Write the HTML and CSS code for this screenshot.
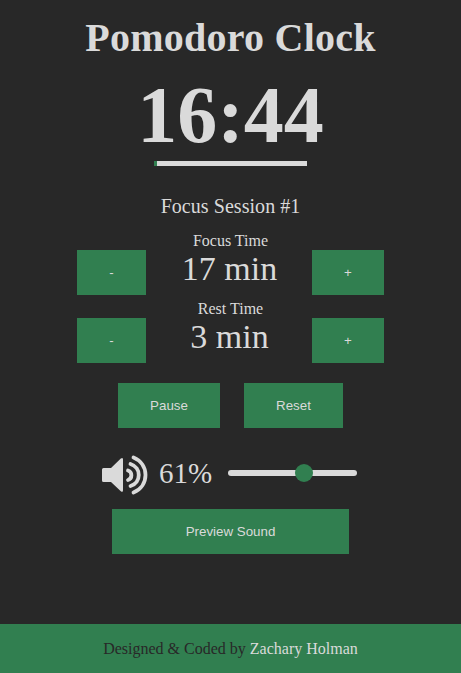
FILE: index.html
```html
<!DOCTYPE html>
<html lang="en">
<head>
<meta charset="utf-8">
<title>Pomodoro Clock</title>
<link rel="stylesheet" href="styles.css">
</head>
<body>
<main>
  <h1>Pomodoro Clock</h1>
  <div class="clock">16:44</div>
  <div class="progress"><div class="progress-fill"></div></div>
  <p class="session">Focus Session #1</p>
  <section class="setting">
    <button>-</button>
    <div class="setting-text"><span class="label">Focus Time</span><span class="value">17 min</span></div>
    <button>+</button>
  </section>
  <section class="setting">
    <button>-</button>
    <div class="setting-text"><span class="label">Rest Time</span><span class="value">3 min</span></div>
    <button>+</button>
  </section>
  <div class="actions"><button class="pause">Pause</button><button class="reset">Reset</button></div>
  <div class="volume">
    <svg class="speaker" viewBox="0 0 46 40" fill="none">
      <path class="cone" d="M1.500 13H9L18.800 3.600Q21 2 21 4.500v30.800q0 2.500-2.200 1L9 27H1.500Q0 27 0 25.500v-11Q0 13 1.500 13z"/>
      <path class="wave" d="M26 15.500c4.500 1.500 4.500 8 0 9.500M28.500 9c11 3.500 11 18.500 0 22M31.500 2.500c16 6.500 16 28.500 0 35"/>
    </svg>
    <span class="percent">61%</span>
    <div class="slider"><div class="thumb"></div></div>
  </div>
  <button class="preview">Preview Sound</button>
</main>
<footer>Designed &amp; Coded by <a>Zachary Holman</a></footer>
</body>
</html>
```
FILE: styles.css
```css
* { box-sizing: border-box; }
body {
  margin: 0;
  height: 673px;
  display: flex;
  flex-direction: column;
  background: #282828;
  color: #dadada;
  font-family: "Liberation Serif", serif;
}
main {
  flex: 1;
  display: flex;
  flex-direction: column;
  align-items: center;
}
h1 { margin: 15px 0 0; font-size: 40px; line-height: 46px; letter-spacing: 0.25px; }
.clock { margin-top: 9px; font-size: 80px; line-height: 91px; height: 91px; font-weight: bold; }
.progress { width: 153px; height: 5px; background: #dadada; }
.progress-fill { width: 3px; height: 5px; background: #317f50; }
.session { margin: 29px 0 0; font-size: 20px; line-height: 22px; letter-spacing: 0.05px; }
.setting { display: flex; width: 307px; height: 68px; justify-content: space-between; }
.session + .setting { margin-top: 15px; }
button {
  height: 45px;
  border: 0;
  padding: 0;
  background: #317f50;
  color: #dadada;
  font: 13.333px "Liberation Sans", sans-serif;
}
.setting button { width: 69px; margin-top: 18px; }
.setting button:last-child { width: 72px; }
.setting-text { display: flex; flex-direction: column; align-items: center; }
.label { margin-left: 3px; font-size: 16px; line-height: 18px; }
.value { margin-left: 1px; font-size: 34px; line-height: 38px; }
.actions { display: flex; gap: 24px; margin-top: 15px; }
.pause { width: 102px; }
.reset { width: 99px; }
.volume { display: flex; align-items: center; width: 257px; height: 40px; margin-top: 27px; }
.speaker { width: 46px; height: 40px; }
.cone { fill: #dadada; }
.wave { stroke: #dadada; stroke-width: 3.8; stroke-linecap: round; }
.percent { width: 69px; margin: 0 0 4px 11px; font-size: 29px; line-height: 34px; }
.slider { width: 129px; height: 6px; margin-bottom: 4px; border-radius: 3px; background: #dadada; }
.thumb { width: 18px; height: 18px; margin-left: 67px; transform: translateY(-6px); border-radius: 50%; background: #317f50; }
.preview { width: 237px; margin-top: 14px; }
footer { height: 49px; background: #317f50; color: #282828; text-align: center; font-size: 16px; line-height: 49px; }
footer a { color: #dadada; }
```
